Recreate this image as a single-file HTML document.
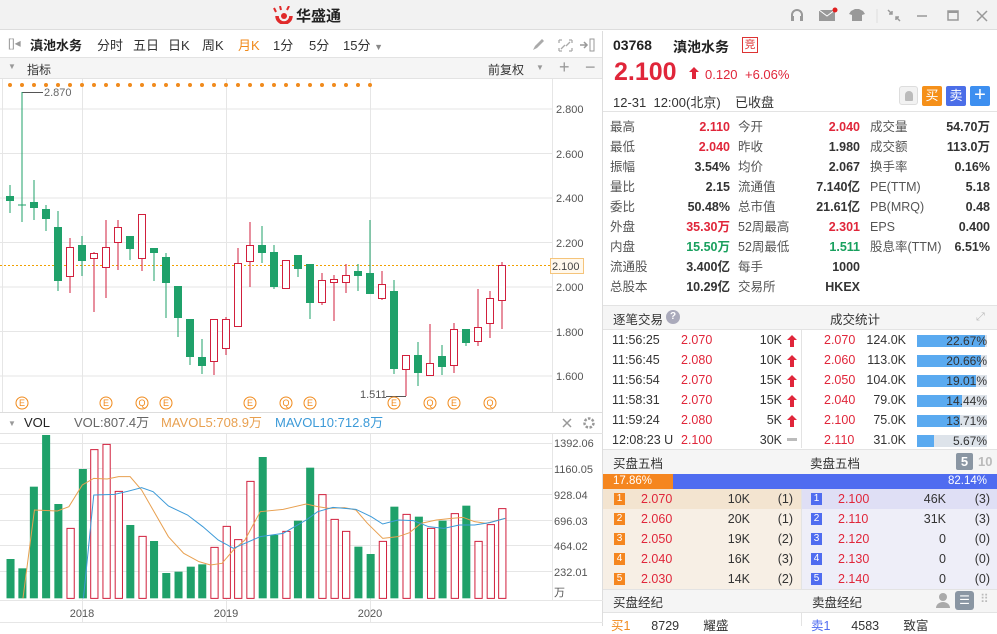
<!DOCTYPE html>
<html><head><meta charset="utf-8">
<style>
*{margin:0;padding:0;box-sizing:border-box}
body{width:997px;height:626px;overflow:hidden;background:#fff;font-family:"Liberation Sans","Noto Sans CJK SC",sans-serif;font-size:12px;color:#333;position:relative}
.a{position:absolute;white-space:nowrap}
.r{color:#e0263a}.g{color:#18a05e}.b{font-weight:bold}
</style></head><body>
<div class="a" style="left:0;top:0;width:997px;height:30px;background:#f2f2f2;border-bottom:1px solid #ddd"></div>
<div class="a" style="left:273px;top:6px;"><svg width="22" height="18" viewBox="0 0 22 18"><path d="M4 10a7 7 0 1 0 14 0" stroke="#e02a2a" stroke-width="3.5" fill="none"/><circle cx="11" cy="10" r="3" fill="#e02a2a"/><path d="M3 6L1 2M8 4L7 0M14 4L16 0" stroke="#e02a2a" stroke-width="2"/></svg></div>
<div class="a b" style="left:296px;top:5px;font-size:15px;color:#222">华盛通</div>
<svg class="a" style="left:785px;top:6px" width="210" height="20">
<path d="M7 12v-3a5 5 0 0 1 10 0v3" stroke="#999" stroke-width="2" fill="none"/><rect x="6" y="10" width="3" height="5" fill="#999"/><rect x="15" y="10" width="3" height="5" fill="#999"/>
<rect x="34" y="4" width="16" height="11" fill="#999"/><path d="M34 4l8 6 8-6" stroke="#fff" fill="none"/><circle cx="50" cy="4" r="2.5" fill="#e02020"/>
<path d="M66 5l4-2h4l4 2 2 3-3 1v6h-10v-6l-3-1z" fill="#999"/>
<line x1="92" y1="3" x2="92" y2="17" stroke="#ddd"/>
<path d="M103 4l4 4M107 5v3h-3M115 15l-4-4M111 14v-3h3" stroke="#999" stroke-width="1.5" fill="none"/>
<line x1="132" y1="10" x2="142" y2="10" stroke="#999" stroke-width="1.5"/>
<rect x="163" y="5" width="10" height="9" stroke="#999" stroke-width="1.5" fill="none"/><line x1="163" y1="6" x2="173" y2="6" stroke="#999" stroke-width="2"/>
<path d="M192 5l10 10M202 5l-10 10" stroke="#999" stroke-width="1.5"/>
</svg>
<div class="a" style="left:0;top:31px;width:603px;height:27px;border-bottom:1px solid #e3e3e3"></div>
<div class="a" style="left:8px;top:36px;color:#999;font-size:12px">[]◂</div>
<div class="a b" style="left:30px;top:35px;font-size:13px;color:#222">滇池水务</div>
<div class="a" style="left:97px;top:35px;font-size:13px;color:#333">分时</div>
<div class="a" style="left:133px;top:35px;font-size:13px">五日</div>
<div class="a" style="left:168px;top:35px;font-size:13px">日K</div>
<div class="a" style="left:202px;top:35px;font-size:13px">周K</div>
<div class="a" style="left:238px;top:35px;font-size:13px;color:#f08a1c">月K</div>
<div class="a" style="left:273px;top:35px;font-size:13px">1分</div>
<div class="a" style="left:309px;top:35px;font-size:13px">5分</div>
<div class="a" style="left:343px;top:35px;font-size:13px">15分 <span style="color:#888;font-size:9px">▼</span></div>
<svg class="a" style="left:530px;top:37px" width="72" height="16"><path d="M3 13l2-4 7-7 2 2-7 7z" fill="#aaa"/><path d="M29 3h3M29 3v3M42 3h-3M42 3v3M29 14h3M29 14v-3M42 14h-3M42 14v-3M31 12l4-4M40 5l-4 4" stroke="#aaa" stroke-width="1.3" fill="none"/><path d="M50 8h6M54 5l3 3-3 3" stroke="#999" stroke-width="1.5" fill="none"/><rect x="60" y="2" width="4" height="12" stroke="#999" fill="none"/></svg>
<div class="a" style="left:0;top:58px;width:603px;height:21px;background:#f5f5f5;border-bottom:1px solid #e3e3e3"></div>
<div class="a" style="left:8px;top:62px;font-size:8px;color:#999">▼</div>
<div class="a" style="left:27px;top:61px;font-size:12px">指标</div>
<div class="a" style="left:488px;top:61px;font-size:12px">前复权</div>
<div class="a" style="left:536px;top:63px;font-size:8px;color:#999">▼</div>
<div class="a" style="left:559px;top:57px;font-size:18px;color:#999">+</div>
<div class="a" style="left:585px;top:57px;font-size:18px;color:#999">−</div>
<div class="a" style="left:602px;top:31px;width:1px;height:595px;background:#ddd"></div>

<svg class="a" style="left:0;top:0" width="603" height="626">
<g stroke="#e6e6e6" stroke-width="1">
<line x1="0" y1="109" x2="552" y2="109"/><line x1="0" y1="153.5" x2="552" y2="153.5"/><line x1="0" y1="198" x2="552" y2="198"/><line x1="0" y1="242.5" x2="552" y2="242.5"/><line x1="0" y1="287" x2="552" y2="287"/><line x1="0" y1="331.5" x2="552" y2="331.5"/><line x1="0" y1="376" x2="552" y2="376"/>
<line x1="82.5" y1="79" x2="82.5" y2="412"/><line x1="226.5" y1="79" x2="226.5" y2="412"/><line x1="370.5" y1="79" x2="370.5" y2="412"/>
<line x1="552.5" y1="79" x2="552.5" y2="412"/><line x1="2.5" y1="79" x2="2.5" y2="412"/>
</g>
<g fill="#555" font-size="11" font-family="Liberation Sans">
<text x="556" y="113">2.800</text><text x="556" y="158">2.600</text><text x="556" y="202">2.400</text><text x="556" y="247">2.200</text><text x="556" y="291">2.000</text><text x="556" y="336">1.800</text><text x="556" y="380">1.600</text>
</g>
<g fill="#f08a1c">
<circle cx="10" cy="85" r="2"/><circle cx="22" cy="85" r="2"/><circle cx="34" cy="85" r="2"/><circle cx="46" cy="85" r="2"/><circle cx="58" cy="85" r="2"/><circle cx="70" cy="85" r="2"/><circle cx="82" cy="85" r="2"/><circle cx="94" cy="85" r="2"/><circle cx="106" cy="85" r="2"/><circle cx="118" cy="85" r="2"/><circle cx="130" cy="85" r="2"/><circle cx="142" cy="85" r="2"/><circle cx="154" cy="85" r="2"/><circle cx="166" cy="85" r="2"/><circle cx="178" cy="85" r="2"/><circle cx="190" cy="85" r="2"/><circle cx="202" cy="85" r="2"/><circle cx="214" cy="85" r="2"/><circle cx="226" cy="85" r="2"/><circle cx="238" cy="85" r="2"/><circle cx="250" cy="85" r="2"/><circle cx="262" cy="85" r="2"/><circle cx="274" cy="85" r="2"/><circle cx="286" cy="85" r="2"/><circle cx="298" cy="85" r="2"/><circle cx="310" cy="85" r="2"/><circle cx="322" cy="85" r="2"/><circle cx="334" cy="85" r="2"/><circle cx="346" cy="85" r="2"/><circle cx="358" cy="85" r="2"/><circle cx="370" cy="85" r="2"/>
</g>
<line x1="0" y1="265.5" x2="550" y2="265.5" stroke="#f0a000" stroke-dasharray="2,2"/>
<rect x="550.5" y="258.5" width="33" height="15" fill="#fff8ec" stroke="#f5c47a"/>
<text x="552" y="270" font-size="11" fill="#444">2.100</text>
<path d="M22 92.5H43" stroke="#555" fill="none"/><text x="44" y="96" font-size="11" fill="#666">2.870</text>
<path d="M386 396.5H406" stroke="#555" fill="none"/><text x="360" y="398" font-size="11" fill="#555">1.511</text>
<g stroke="#1fa16a" fill="#1fa16a">
<line x1="10" y1="185" x2="10" y2="213"/><rect x="6" y="196" width="8" height="5" stroke="none"/>
<line x1="22" y1="92" x2="22" y2="222"/><line x1="18" y1="205" x2="26" y2="205"/>
<line x1="34" y1="180" x2="34" y2="220"/><rect x="30" y="202" width="8" height="6" stroke="none"/>
<line x1="46" y1="205" x2="46" y2="231"/><rect x="42" y="209" width="8" height="10" stroke="none"/>
<line x1="58" y1="211" x2="58" y2="291"/><rect x="54" y="227" width="8" height="54" stroke="none"/>
<line x1="82" y1="236" x2="82" y2="276"/><rect x="78" y="245" width="8" height="16" stroke="none"/>
<line x1="130" y1="236" x2="130" y2="260"/><rect x="126" y="236" width="8" height="13" stroke="none"/>
<line x1="154" y1="248" x2="154" y2="281"/><rect x="150" y="248" width="8" height="5" stroke="none"/>
<line x1="166" y1="253" x2="166" y2="318"/><rect x="162" y="257" width="8" height="26" stroke="none"/>
<line x1="178" y1="286" x2="178" y2="337"/><rect x="174" y="286" width="8" height="32" stroke="none"/>
<line x1="190" y1="319" x2="190" y2="365"/><rect x="186" y="319" width="8" height="38" stroke="none"/>
<line x1="202" y1="339" x2="202" y2="374"/><rect x="198" y="357" width="8" height="9" stroke="none"/>
<line x1="262" y1="226" x2="262" y2="263"/><rect x="258" y="245" width="8" height="8" stroke="none"/>
<line x1="274" y1="245" x2="274" y2="289"/><rect x="270" y="252" width="8" height="35" stroke="none"/>
<line x1="298" y1="255" x2="298" y2="277"/><rect x="294" y="255" width="8" height="14" stroke="none"/>
<line x1="310" y1="264" x2="310" y2="319"/><rect x="306" y="264" width="8" height="39" stroke="none"/>
<line x1="358" y1="264" x2="358" y2="291"/><rect x="354" y="271" width="8" height="5" stroke="none"/>
<line x1="370" y1="220" x2="370" y2="294"/><rect x="366" y="273" width="8" height="21" stroke="none"/>
<line x1="394" y1="280" x2="394" y2="374"/><rect x="390" y="291" width="8" height="78" stroke="none"/>
<line x1="418" y1="342" x2="418" y2="386"/><rect x="414" y="355" width="8" height="18" stroke="none"/>
<line x1="442" y1="345" x2="442" y2="375"/><rect x="438" y="356" width="8" height="11" stroke="none"/>
<line x1="466" y1="329" x2="466" y2="346"/><rect x="462" y="329" width="8" height="14" stroke="none"/>
</g>
<g stroke="#d11f3c" fill="#fff">
<line x1="70" y1="238" x2="70" y2="293"/><rect x="66.5" y="247.5" width="7" height="29"/>
<line x1="94" y1="252" x2="94" y2="312"/><rect x="90.5" y="253.5" width="7" height="5"/>
<line x1="106" y1="220" x2="106" y2="298"/><rect x="102.5" y="247.5" width="7" height="20"/>
<line x1="118" y1="220" x2="118" y2="270"/><rect x="114.5" y="227.5" width="7" height="15"/>
<line x1="142" y1="214" x2="142" y2="271"/><rect x="138.5" y="214.5" width="7" height="44"/>
<line x1="214" y1="319" x2="214" y2="375"/><rect x="210.5" y="319.5" width="7" height="42"/>
<line x1="226" y1="317" x2="226" y2="355"/><rect x="222.5" y="319.5" width="7" height="29"/>
<line x1="238" y1="248" x2="238" y2="327"/><rect x="234.5" y="263.5" width="7" height="63"/>
<line x1="250" y1="222" x2="250" y2="287"/><rect x="246.5" y="245.5" width="7" height="16"/>
<line x1="286" y1="260" x2="286" y2="289"/><rect x="282.5" y="260.5" width="7" height="28"/>
<line x1="322" y1="273" x2="322" y2="305"/><rect x="318.5" y="280.5" width="7" height="22"/>
<line x1="334" y1="275" x2="334" y2="321"/><rect x="330.5" y="279.5" width="7" height="3"/>
<line x1="346" y1="264" x2="346" y2="293"/><rect x="342.5" y="275.5" width="7" height="7"/>
<line x1="382" y1="271" x2="382" y2="300"/><rect x="378.5" y="284.5" width="7" height="14"/>
<line x1="406" y1="355" x2="406" y2="396"/><rect x="402.5" y="355.5" width="7" height="14"/>
<line x1="430" y1="324" x2="430" y2="376"/><rect x="426.5" y="363.5" width="7" height="12"/>
<line x1="454" y1="323" x2="454" y2="373"/><rect x="450.5" y="329.5" width="7" height="36"/>
<line x1="478" y1="289" x2="478" y2="346"/><rect x="474.5" y="327.5" width="7" height="14"/>
<line x1="490" y1="291" x2="490" y2="338"/><rect x="486.5" y="298.5" width="7" height="25"/>
<line x1="502" y1="262" x2="502" y2="329"/><rect x="498.5" y="265.5" width="7" height="35"/>
</g>
<g fill="none" stroke="#f08a1c">
<circle cx="22" cy="403" r="6"/><circle cx="106" cy="403" r="6"/><circle cx="142" cy="403" r="6"/><circle cx="166" cy="403" r="6"/><circle cx="250" cy="403" r="6"/><circle cx="286" cy="403" r="6"/><circle cx="310" cy="403" r="6"/><circle cx="394" cy="403" r="6"/><circle cx="430" cy="403" r="6"/><circle cx="454" cy="403" r="6"/><circle cx="490" cy="403" r="6"/>
</g>
<g fill="#f08a1c" font-size="9" font-family="Liberation Sans" text-anchor="middle">
<text x="22" y="406">E</text><text x="106" y="406">E</text><text x="142" y="406">Q</text><text x="166" y="406">E</text><text x="250" y="406">E</text><text x="286" y="406">Q</text><text x="310" y="406">E</text><text x="394" y="406">E</text><text x="430" y="406">Q</text><text x="454" y="406">E</text><text x="490" y="406">Q</text>
</g>
<line x1="0" y1="412.5" x2="603" y2="412.5" stroke="#ddd"/>
<line x1="0" y1="433.5" x2="603" y2="433.5" stroke="#e3e3e3"/>
<text x="8" y="426" font-size="8" fill="#999">▼</text>
<text x="24" y="427" font-size="13" fill="#222">VOL</text>
<text x="74" y="427" font-size="13" fill="#666">VOL:807.4万</text>
<text x="161" y="427" font-size="13" fill="#e8a050">MAVOL5:708.9万</text>
<text x="275" y="427" font-size="13" fill="#3c9ad8">MAVOL10:712.8万</text>
<path d="M563 419l8 8M571 419l-8 8" stroke="#999" stroke-width="1.5"/>
<circle cx="589" cy="423" r="4.5" fill="none" stroke="#999" stroke-width="2.5" stroke-dasharray="2.5,1.5"/>
<g stroke="#e6e6e6">
<line x1="0" y1="443.5" x2="552" y2="443.5"/><line x1="0" y1="468.5" x2="552" y2="468.5"/><line x1="0" y1="494.5" x2="552" y2="494.5"/><line x1="0" y1="520.5" x2="552" y2="520.5"/><line x1="0" y1="545.5" x2="552" y2="545.5"/><line x1="0" y1="571.5" x2="552" y2="571.5"/>
<line x1="82.5" y1="434" x2="82.5" y2="622"/><line x1="226.5" y1="434" x2="226.5" y2="622"/><line x1="370.5" y1="434" x2="370.5" y2="622"/>
<line x1="552.5" y1="434" x2="552.5" y2="600"/>
<line x1="0" y1="600.5" x2="603" y2="600.5"/><line x1="0" y1="622.5" x2="603" y2="622.5"/>
</g>
<g fill="#555" font-size="11">
<text x="554" y="447">1392.06</text><text x="554" y="473">1160.05</text><text x="554" y="499">928.04</text><text x="554" y="525">696.03</text><text x="554" y="550">464.02</text><text x="554" y="576">232.01</text><text x="554" y="596">万</text>
</g>
<g fill="#555" font-size="11" text-anchor="middle">
<text x="82" y="617">2018</text><text x="226" y="617">2019</text><text x="370" y="617">2020</text>
</g>
<g transform="translate(0,410) scale(0.3827,0.33333)">
<g fill="#1fa16a">
<rect x="17" y="447" width="21" height="118"/><rect x="48" y="475" width="21" height="90"/><rect x="78" y="230" width="21" height="335"/><rect x="110" y="75" width="21" height="490"/><rect x="142" y="282" width="21" height="283"/><rect x="206" y="177" width="21" height="388"/><rect x="330" y="345" width="21" height="220"/><rect x="392" y="393" width="21" height="172"/><rect x="424" y="489" width="21" height="76"/><rect x="456" y="485" width="21" height="80"/><rect x="488" y="470" width="21" height="95"/><rect x="518" y="463" width="21" height="102"/><rect x="676" y="141" width="21" height="424"/><rect x="706" y="375" width="21" height="190"/><rect x="768" y="332" width="21" height="233"/><rect x="800" y="173" width="21" height="392"/><rect x="926" y="410" width="21" height="155"/><rect x="958" y="432" width="21" height="133"/><rect x="1020" y="290" width="21" height="275"/><rect x="1084" y="320" width="21" height="245"/><rect x="1146" y="332" width="21" height="233"/><rect x="1208" y="287" width="21" height="278"/>
</g>
<g fill="#fff" stroke="#d11f3c" stroke-width="1" vector-effect="non-scaling-stroke">
<rect vector-effect="non-scaling-stroke" x="175" y="355" width="19" height="210"/><rect vector-effect="non-scaling-stroke" x="237" y="119" width="19" height="446"/><rect vector-effect="non-scaling-stroke" x="269" y="103" width="19" height="462"/><rect vector-effect="non-scaling-stroke" x="301" y="244" width="19" height="321"/><rect vector-effect="non-scaling-stroke" x="363" y="379" width="19" height="186"/><rect vector-effect="non-scaling-stroke" x="551" y="412" width="19" height="153"/><rect vector-effect="non-scaling-stroke" x="583" y="349" width="19" height="216"/><rect vector-effect="non-scaling-stroke" x="613" y="389" width="19" height="176"/><rect vector-effect="non-scaling-stroke" x="645" y="214" width="19" height="351"/><rect vector-effect="non-scaling-stroke" x="739" y="364" width="19" height="201"/><rect vector-effect="non-scaling-stroke" x="833" y="254" width="19" height="311"/><rect vector-effect="non-scaling-stroke" x="865" y="328" width="19" height="237"/><rect vector-effect="non-scaling-stroke" x="895" y="364" width="19" height="201"/><rect vector-effect="non-scaling-stroke" x="991" y="394" width="19" height="171"/><rect vector-effect="non-scaling-stroke" x="1053" y="313" width="19" height="252"/><rect vector-effect="non-scaling-stroke" x="1117" y="355" width="19" height="210"/><rect vector-effect="non-scaling-stroke" x="1179" y="311" width="19" height="254"/><rect vector-effect="non-scaling-stroke" x="1241" y="394" width="19" height="171"/><rect vector-effect="non-scaling-stroke" x="1273" y="344" width="19" height="221"/><rect vector-effect="non-scaling-stroke" x="1303" y="296" width="19" height="269"/>
</g>
<polyline vector-effect="non-scaling-stroke" fill="none" stroke="#e8a050" stroke-width="1" points="60,565 90,300 150,303 180,290 215,225 245,205 280,207 310,200 340,200 370,240 400,300 440,380 480,430 520,455 550,465 580,460 610,420 640,390 680,305 740,298 800,282 830,290 860,295 900,293 930,300 960,340 1000,385 1040,380 1070,368 1100,340 1140,330 1180,325 1210,322 1240,335 1270,340 1320,325"/>
<polyline vector-effect="non-scaling-stroke" fill="none" stroke="#3c9ad8" stroke-width="1" points="218,565 245,255 300,253 330,245 370,233 400,245 440,288 490,315 530,350 570,390 610,415 640,400 680,380 740,370 800,330 830,305 870,292 930,298 970,320 1000,342 1040,330 1080,332 1120,350 1160,355 1200,345 1240,345 1280,338 1320,325"/>
</g>
</svg>

<div class="a b" style="left:613px;top:37px;font-size:14px;color:#222">03768</div>
<div class="a b" style="left:673px;top:37px;font-size:14px;color:#222">滇池水务</div>
<div class="a" style="left:742px;top:37px;width:16px;height:16px;border:1px solid #d33;color:#d33;font-size:11px;text-align:center;line-height:14px">竞</div>
<div class="a b r" style="left:614px;top:58px;font-size:25px">2.100</div>
<svg class="a" style="left:689px;top:67px" width="10" height="12"><path d="M5 0L10 5H7V12H3V5H0Z" fill="#e0263a"/></svg>
<div class="a r" style="left:705px;top:67px;font-size:13px">0.120</div>
<div class="a r" style="left:745px;top:67px;font-size:13px">+6.06%</div>
<div class="a" style="left:613px;top:92px;font-size:13px;color:#333">12-31&nbsp;&nbsp;12:00(北京)</div>
<div class="a" style="left:735px;top:92px;font-size:13px;color:#333">已收盘</div>
<div class="a" style="left:899px;top:86px;width:19px;height:19px;border:1px solid #ddd;border-radius:3px;background:#f2f2f2"><div style="margin:4px auto;width:8px;height:10px;background:#bbb;border-radius:4px 4px 1px 1px"></div></div>
<div class="a" style="left:922px;top:86px;width:20px;height:20px;background:#f59019;border-radius:2px;color:#fff;font-size:13px;text-align:center;line-height:20px">买</div>
<div class="a" style="left:946px;top:86px;width:20px;height:20px;background:#4b6ee8;border-radius:2px;color:#fff;font-size:13px;text-align:center;line-height:20px">卖</div>
<div class="a" style="left:970px;top:86px;width:20px;height:20px;background:#3d8ff0;border-radius:2px;color:#fff;font-size:20px;text-align:center;line-height:19px">+</div>
<div class="a" style="left:603px;top:111px;width:394px;height:1px;background:#e3e3e3"></div>

<div class="a" style="left:610px;top:117px;width:380px;font-size:12.5px;line-height:20px">
<div class="a" style="left:0;top:0;color:#555">最高<br>最低<br>振幅<br>量比<br>委比<br>外盘<br>内盘<br>流通股<br>总股本</div>
<div class="a b" style="left:20px;width:100px;top:0;text-align:right"><span class="r">2.110</span><br><span class="r">2.040</span><br>3.54%<br>2.15<br>50.48%<br><span class="r">35.30万</span><br><span class="g">15.50万</span><br>3.400亿<br>10.29亿</div>
<div class="a" style="left:128px;top:0;color:#555">今开<br>昨收<br>均价<br>流通值<br>总市值<br>52周最高<br>52周最低<br>每手<br>交易所</div>
<div class="a b" style="left:150px;width:100px;top:0;text-align:right"><span class="r">2.040</span><br>1.980<br>2.067<br>7.140亿<br>21.61亿<br><span class="r">2.301</span><br><span class="g">1.511</span><br>1000<br>HKEX</div>
<div class="a" style="left:260px;top:0;color:#555">成交量<br>成交额<br>换手率<br>PE(TTM)<br>PB(MRQ)<br>EPS<br>股息率(TTM)</div>
<div class="a b" style="left:280px;width:100px;top:0;text-align:right">54.70万<br>113.0万<br>0.16%<br>5.18<br>0.48<br>0.400<br>6.51%</div>
</div>

<div class="a" style="left:603px;top:305px;width:394px;height:25px;background:#f5f5f5;border-top:1px solid #e3e3e3;border-bottom:1px solid #e3e3e3"></div>
<div class="a" style="left:613px;top:309px;font-size:12.5px">逐笔交易</div>
<div class="a" style="left:666px;top:310px;width:14px;height:14px;border-radius:7px;background:#aab;color:#fff;font-size:10px;text-align:center;line-height:14px;font-weight:bold">?</div>
<div class="a" style="left:830px;top:309px;font-size:12.5px">成交统计</div>
<div class="a" style="left:976px;top:311px;font-size:11px;color:#bbb">⤢</div>
<div class="a" style="left:801px;top:330px;width:1px;height:118px;background:#e3e3e3"></div>
<div class="a" style="left:612px;top:330px;font-size:12.5px;line-height:20px">11:56:25<br>11:56:45<br>11:56:54<br>11:58:31<br>11:59:24<br>12:08:23 U</div>
<div class="a r" style="left:681px;top:330px;font-size:12.5px;line-height:20px">2.070<br>2.080<br>2.070<br>2.070<br>2.080<br>2.100</div>
<div class="a" style="left:740px;top:330px;width:42px;text-align:right;font-size:12.5px;line-height:20px">10K<br>10K<br>15K<br>15K<br>5K<br>30K</div>
<svg class="a" style="left:787px;top:333px" width="12" height="112">
<g fill="#e0263a"><path d="M5 2L10 7H7V14H3V7H0Z"/><path d="M5 22L10 27H7V34H3V27H0Z"/><path d="M5 42L10 47H7V54H3V47H0Z"/><path d="M5 62L10 67H7V74H3V67H0Z"/><path d="M5 82L10 87H7V94H3V87H0Z"/></g>
<rect x="0" y="105" width="10" height="3" fill="#bbb"/></svg>
<div class="a r" style="left:824px;top:330px;font-size:12.5px;line-height:20px">2.070<br>2.060<br>2.050<br>2.040<br>2.100<br>2.110</div>
<div class="a" style="left:858px;top:330px;width:48px;text-align:right;font-size:12.5px;line-height:20px">124.0K<br>113.0K<br>104.0K<br>79.0K<br>75.0K<br>31.0K</div>
<div class="a" style="left:917px;top:335px;width:70px;height:12px;background:#dde3ea"><div style="width:68px;height:12px;background:#5aaaf0"></div></div>
<div class="a" style="left:917px;top:355px;width:70px;height:12px;background:#dde3ea"><div style="width:64px;height:12px;background:#5aaaf0"></div></div>
<div class="a" style="left:917px;top:375px;width:70px;height:12px;background:#dde3ea"><div style="width:59px;height:12px;background:#5aaaf0"></div></div>
<div class="a" style="left:917px;top:395px;width:70px;height:12px;background:#dde3ea"><div style="width:45px;height:12px;background:#5aaaf0"></div></div>
<div class="a" style="left:917px;top:415px;width:70px;height:12px;background:#dde3ea"><div style="width:43px;height:12px;background:#5aaaf0"></div></div>
<div class="a" style="left:917px;top:435px;width:70px;height:12px;background:#dde3ea"><div style="width:17px;height:12px;background:#5aaaf0"></div></div>
<div class="a" style="left:917px;top:331px;width:70px;text-align:right;font-size:12px;line-height:20px;color:#333">22.67%<br>20.66%<br>19.01%<br>14.44%<br>13.71%<br>5.67%</div>

<div class="a" style="left:603px;top:449px;width:394px;height:25px;background:#f5f5f5;border-top:1px solid #e3e3e3"></div>
<div class="a" style="left:613px;top:453px;font-size:12.5px">买盘五档</div>
<div class="a" style="left:810px;top:453px;font-size:12.5px">卖盘五档</div>
<div class="a b" style="left:956px;top:453px;width:17px;height:17px;background:#8a96a3;color:#fff;border-radius:2px;text-align:center;line-height:17px;font-size:13px">5</div>
<div class="a b" style="left:978px;top:454px;color:#bbb;font-size:13px">10</div>
<div class="a" style="left:603px;top:474px;width:70px;height:15px;background:#f5861f;color:#fff;font-size:11.5px;line-height:15px;padding-left:10px">17.86%</div>
<div class="a" style="left:673px;top:474px;width:324px;height:15px;background:#4f6cf0;color:#fff;font-size:11.5px;line-height:15px;text-align:right;padding-right:10px">82.14%</div>
<div class="a" style="left:603px;top:489px;width:198px;height:100px;background:#f7efe5"></div>
<div class="a" style="left:603px;top:489px;width:198px;height:20px;background:#f3e4d0"></div>
<div class="a" style="left:802px;top:489px;width:195px;height:100px;background:#eeeef8"></div>
<div class="a" style="left:802px;top:489px;width:195px;height:20px;background:#dfdff5"></div>
<div class="a" style="left:801px;top:489px;width:1px;height:100px;background:#e3e3e3"></div>
<div class="a" style="left:614px;top:493px;line-height:20px;font-size:10px;color:#fff">
<div style="width:11px;height:12px;background:#f5861f;text-align:center;line-height:12px;margin-bottom:8px">1</div><div style="width:11px;height:12px;background:#f5861f;text-align:center;line-height:12px;margin-bottom:8px">2</div><div style="width:11px;height:12px;background:#f5861f;text-align:center;line-height:12px;margin-bottom:8px">3</div><div style="width:11px;height:12px;background:#f5861f;text-align:center;line-height:12px;margin-bottom:8px">4</div><div style="width:11px;height:12px;background:#f5861f;text-align:center;line-height:12px">5</div></div>
<div class="a" style="left:811px;top:493px;line-height:20px;font-size:10px;color:#fff">
<div style="width:11px;height:12px;background:#4f6cf0;text-align:center;line-height:12px;margin-bottom:8px">1</div><div style="width:11px;height:12px;background:#4f6cf0;text-align:center;line-height:12px;margin-bottom:8px">2</div><div style="width:11px;height:12px;background:#4f6cf0;text-align:center;line-height:12px;margin-bottom:8px">3</div><div style="width:11px;height:12px;background:#4f6cf0;text-align:center;line-height:12px;margin-bottom:8px">4</div><div style="width:11px;height:12px;background:#4f6cf0;text-align:center;line-height:12px">5</div></div>
<div class="a r" style="left:641px;top:489px;font-size:12.5px;line-height:20px">2.070<br>2.060<br>2.050<br>2.040<br>2.030</div>
<div class="a" style="left:700px;top:489px;width:50px;text-align:right;font-size:12.5px;line-height:20px">10K<br>20K<br>19K<br>16K<br>14K</div>
<div class="a" style="left:755px;top:489px;width:38px;text-align:right;font-size:12.5px;line-height:20px">(1)<br>(1)<br>(2)<br>(3)<br>(2)</div>
<div class="a r" style="left:838px;top:489px;font-size:12.5px;line-height:20px">2.100<br>2.110<br>2.120<br>2.130<br>2.140</div>
<div class="a" style="left:900px;top:489px;width:46px;text-align:right;font-size:12.5px;line-height:20px">46K<br>31K<br>0<br>0<br>0</div>
<div class="a" style="left:952px;top:489px;width:38px;text-align:right;font-size:12.5px;line-height:20px">(3)<br>(3)<br>(0)<br>(0)<br>(0)</div>

<div class="a" style="left:603px;top:589px;width:394px;height:24px;background:#f5f5f5;border-top:1px solid #e3e3e3;border-bottom:1px solid #e3e3e3"></div>
<div class="a" style="left:613px;top:592px;font-size:12.5px">买盘经纪</div>
<div class="a" style="left:812px;top:592px;font-size:12.5px">卖盘经纪</div>
<svg class="a" style="left:936px;top:592px" width="14" height="16"><circle cx="7" cy="5" r="4" fill="#aaa"/><path d="M0 16a7 6 0 0 1 14 0z" fill="#aaa"/></svg>
<div class="a" style="left:955px;top:591px;width:19px;height:19px;background:#8a96a3;border-radius:3px;color:#fff;font-size:12px;text-align:center;line-height:19px">☰</div>
<div class="a" style="left:980px;top:592px;font-size:12px;color:#bbb">⠿</div>
<div class="a" style="left:801px;top:613px;width:1px;height:13px;background:#e3e3e3"></div>
<div class="a" style="left:611px;top:615px;font-size:12.5px"><span style="color:#f08a1c">买1</span>&nbsp;&nbsp;&nbsp;&nbsp;&nbsp;&nbsp;8729&nbsp;&nbsp;&nbsp;&nbsp;&nbsp;&nbsp;&nbsp;耀盛</div>
<div class="a" style="left:811px;top:615px;font-size:12.5px"><span style="color:#4f6cf0">卖1</span>&nbsp;&nbsp;&nbsp;&nbsp;&nbsp;&nbsp;4583&nbsp;&nbsp;&nbsp;&nbsp;&nbsp;&nbsp;&nbsp;致富</div>
</body></html>
